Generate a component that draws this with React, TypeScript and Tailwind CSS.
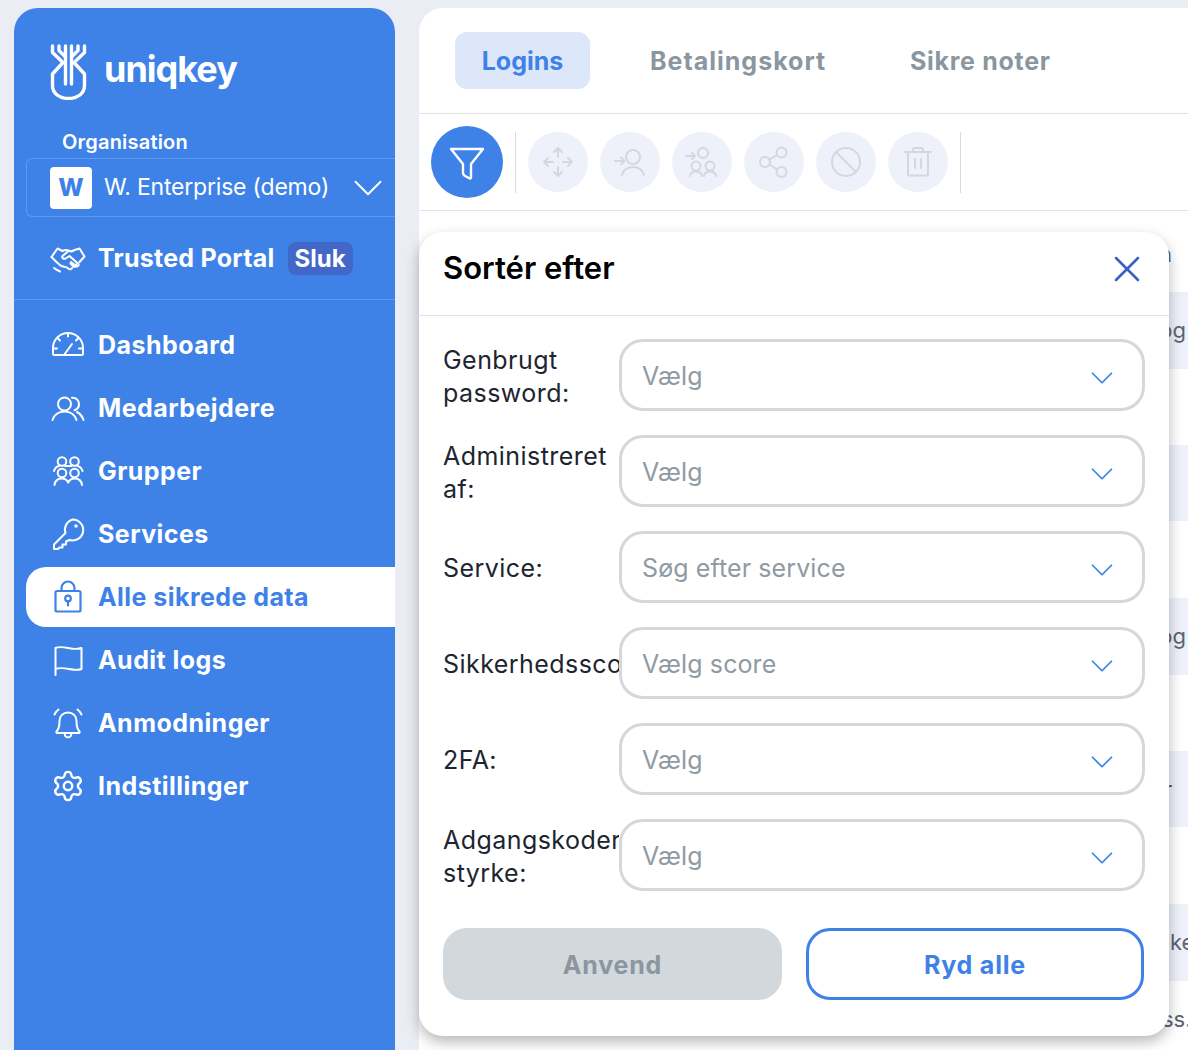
import React from 'react';
import { ChevronDown, X, Settings } from 'lucide-react';

const font = 'font-["Inter","Liberation_Sans",sans-serif]';

const Logo = () => (
  <svg width="37" height="56" viewBox="0 0 37 56" fill="none" stroke="white" strokeWidth="3.4" strokeLinecap="round" strokeLinejoin="round">
    <path d="M15.500 2v38M21.500 2v38" />
    <path d="M2.500 2v6.500l10.500 10-10.500 11.500v11.500c0 8 7 13 16 13s16-5 16-13V30L24 18.500 34.500 8.500V2" />
    <path d="M9 2v4.500l6.500 6.500M28 2v4.500L21.500 13" />
  </svg>
);

const Gauge = () => (
  <svg width="34" height="34" viewBox="0 0 34 34" fill="none" stroke="currentColor" strokeWidth="2" strokeLinecap="round" strokeLinejoin="round">
    <path d="M2 25.500V20a15 15 0 0 1 30 0v5.500c0 1-.5 1.500-1.500 1.500h-27c-1 0-1.500-.5-1.500-1.500Z" />
    <path d="M17 5v3.500M6.500 10l2.500 2.500M27.500 10 25 12.500M2.500 20.500h3.500M28 20.500h3.500M13 27l8-11" />
  </svg>
);

const Users = () => (
  <svg width="34" height="34" viewBox="0 0 34 34" fill="none" stroke="currentColor" strokeWidth="2" strokeLinecap="round" strokeLinejoin="round">
    <circle cx="13.500" cy="13" r="6.500" />
    <path d="M1.500 29c1.500-5 6-8.500 12-8.500s10.500 3.500 12 8.500" />
    <path d="M21 6.700c3.500-.5 7 2.300 7 6.300 0 3-1.700 5.300-4.500 6.200M26 21c3 1.500 5.200 4.300 6.500 8" />
  </svg>
);

const Groups = () => (
  <svg width="34" height="34" viewBox="0 0 34 34" fill="none" stroke="currentColor" strokeWidth="2" strokeLinecap="round" strokeLinejoin="round">
    <circle cx="11" cy="7.500" r="4.300" /><circle cx="23.500" cy="7.500" r="4.300" />
    <circle cx="11" cy="19" r="4.300" /><circle cx="23.500" cy="19" r="4.300" />
    <path d="M3 17c.8-3 3-4.500 5-5M31.500 17c-.8-3-3-4.500-5-5M14 12h6.500" />
    <path d="M3.500 31c.5-4 3.500-6.500 7.500-6.500 2.800 0 5 1.500 6.200 4 1.300-2.500 3.500-4 6.300-4 4 0 7 2.500 7.500 6.500" />
  </svg>
);

const KeyIcon = () => (
  <svg width="34" height="34" viewBox="0 0 34 34" fill="none" stroke="currentColor" strokeWidth="2" strokeLinecap="round" strokeLinejoin="round">
    <path d="M21.500 2.500a10.500 10.500 0 1 1-3 20.500l-3.500 1.500v3h-3.500v3h-3L7 32H3v-4.500L14.500 16a10.500 10.500 0 0 1 7-13.500Z" />
    <circle cx="25" cy="9" r=".8" />
  </svg>
);

const Lock = () => (
  <svg width="34" height="34" viewBox="0 0 34 34" fill="none" stroke="currentColor" strokeWidth="2.200" strokeLinecap="round" strokeLinejoin="round">
    <rect x="4.500" y="11" width="25" height="20.500" rx="1.500" />
    <path d="M10.500 11V8a6.500 6.500 0 0 1 13 0v3" />
    <circle cx="17" cy="18.500" r="2.800" />
    <path d="M17 21.300v4.200" />
  </svg>
);

const FlagIcon = () => (
  <svg width="34" height="34" viewBox="0 0 34 34" fill="none" stroke="currentColor" strokeWidth="2" strokeLinecap="round" strokeLinejoin="round">
    <path d="M4.500 32V5c8-3.500 17 3.500 26 0v21c-8 3.500-17-3.500-26 0" />
  </svg>
);

const Bell = () => (
  <svg width="34" height="34" viewBox="0 0 34 34" fill="none" stroke="currentColor" strokeWidth="2" strokeLinecap="round" strokeLinejoin="round">
    <path d="M5.500 25.500c2.500-2.500 3-6 3-10.500 0-5 3.500-8.500 8.500-8.500s8.500 3.500 8.500 8.500c0 4.500.5 8 3 10.500.5.800 0 1.500-.8 1.500H6.300c-.8 0-1.300-.7-.8-1.500Z" />
    <path d="M13.500 27.500c.3 2.500 1.700 3.800 3.500 3.800s3.200-1.300 3.500-3.800M3.500 8.500c.8-1.900 2.100-3.600 4-5M30.500 8.500c-.8-1.900-2.100-3.600-4-5" />
  </svg>
);

const Handshake = () => (
  <svg width="36" height="30" viewBox="0 0 36 30" fill="none" stroke="white" strokeWidth="2" strokeLinecap="round" strokeLinejoin="round">
    <path d="M1.500 13 7.500 4.500l5 2.500c2-1 4-1.500 6-.5l3 1 3-1.500 5-1.500 5 8-5 5.500" />
    <path d="M18.500 7l-6 5c-1 1.500 1 3.500 3 2.500l4-2.500 9 8c.8 1.500-1 3-2.500 2l-5-4M26 20.500c.8 1.500-1 3-2.500 2l-3-3M22 24c-.5 1.500-2 1.500-3 1l-3-2" />
    <path d="M1.500 13l5 5 4 3.500 4 1.500M4 24c2 1.500 4 2.500 6 3.500" />
  </svg>
);

const nav = [
  { label: 'Dashboard', icon: <Gauge /> },
  { label: 'Medarbejdere', icon: <Users /> },
  { label: 'Grupper', icon: <Groups /> },
  { label: 'Services', icon: <KeyIcon /> },
  { label: 'Alle sikrede data', icon: <Lock />, active: true },
  { label: 'Audit logs', icon: <FlagIcon /> },
  { label: 'Anmodninger', icon: <Bell /> },
  { label: 'Indstillinger', icon: <Settings size={34} strokeWidth={1.700} /> },
];

// toolbar icons, all in a 34 box
const iconProps = { width: 34, height: 34, viewBox: '0 0 34 34', fill: 'none', stroke: '#d3d8dc', strokeWidth: 2, strokeLinecap: 'round' as const, strokeLinejoin: 'round' as const };

const tools = [
  <svg {...iconProps}><path d="M17 3v9M17 22v9M3 17h9M22 17h9M13 7l4-4 4 4M13 27l4 4 4-4M7 13l-4 4 4 4M27 13l4 4-4 4" /></svg>,
  <svg {...iconProps}><circle cx="20" cy="12" r="7" /><path d="M9 30c1.500-5 5.500-8 11-8s9.500 3 11 8M2 16h9M8 12.500l3.500 3.500L8 19.500" /></svg>,
  <svg {...iconProps}><circle cx="18" cy="8" r="5" /><circle cx="11" cy="21" r="4.500" /><circle cx="25" cy="21" r="4.500" /><path d="M5 31c.5-3 3-4.500 6-4.500 3 0 5.500 1.500 6 4.500M19 31c.5-3 3-4.500 6-4.500 3 0 5.500 1.500 6 4.500M1 11h9M7 8l3 3-3 3" /></svg>,
  <svg {...iconProps}><circle cx="24.500" cy="7.500" r="5" /><circle cx="8" cy="17" r="5" /><circle cx="24.500" cy="27" r="5" /><path d="M12.500 14.500 20 10M12.500 19.500 20 24.500" /></svg>,
  <svg {...iconProps}><circle cx="17" cy="17" r="14" /><path d="M7 7l20 20" /></svg>,
  <svg {...iconProps}><path d="M4 7h26M12 7V4.500c0-1 .5-1.500 1.500-1.500h7c1 0 1.500.5 1.500 1.500V7M7 7v22c0 1 .5 1.500 1.500 1.500h17c1 0 1.500-.5 1.500-1.500V7M14 14v9M20 14v9" /></svg>,
];

const fields = [
  { label: ['Genbrugt', 'password:'], placeholder: 'Vælg' },
  { label: ['Administreret', 'af:'], placeholder: 'Vælg' },
  { label: ['Service:'], placeholder: 'Søg efter service' },
  { label: ['Sikkerhedsscore:'], placeholder: 'Vælg score' },
  { label: ['2FA:'], placeholder: 'Vælg' },
  { label: ['Adgangskoder', 'styrke:'], placeholder: 'Vælg' },
];

const rows = [
  { text: 'n', pl: 'pl-[740px] pt-[6px]', band: false, h: 'h-[81px]' },
  { text: 'log', pl: 'pl-[735px]', band: true, h: 'h-[77px]' },
  { text: '', pl: '', band: false, h: 'h-[76px]' },
  { text: '', pl: '', band: true, h: 'h-[76px]' },
  { text: '', pl: '', band: false, h: 'h-[77px]' },
  { text: 'log', pl: 'pl-[735px]', band: true, h: 'h-[77px]' },
  { text: '', pl: '', band: false, h: 'h-[76px]' },
  { text: 'r', pl: 'pl-[745px]', band: true, h: 'h-[76px]' },
  { text: '', pl: '', band: false, h: 'h-[77px]' },
  { text: 'ke', pl: 'pl-[751px]', band: true, h: 'h-[77px]' },
  { text: 'ss.', pl: 'pl-[743px]', band: false, h: 'h-[76px]' },
];

export default function App() {
  return (
    <div className={`${font} flex h-[1050px] w-[1188px] gap-6 overflow-hidden bg-[#eaedf4] pl-[14px] pt-2`}>
      <aside className="h-[1100px] w-[381px] shrink-0 rounded-t-[24px] bg-[#3e82e8] text-white">
        <div className="flex items-center gap-[17px] pl-9 pt-9">
          <Logo />
          <span className="pb-[6px] text-[36px] font-bold leading-none tracking-[-1px]">uniqkey</span>
        </div>
        <div className="pl-12 pt-[29px] text-[20px] font-semibold leading-[26px] tracking-[0.2px]">Organisation</div>
        <div className="mb-[25px] ml-3 mt-[3px] flex h-[59px] items-center rounded-l-md border border-r-0 border-[#5f9af0] pl-[23px]">
          <div className="flex size-[42px] items-center justify-center rounded bg-white text-[24px] font-extrabold text-[#3e82e8]">W</div>
          <span className="ml-3 text-[23px] tracking-[-0.2px]">W. Enterprise (demo)</span>
          <ChevronDown size={50} strokeWidth={0.900} className="ml-[14px] shrink-0" />
        </div>
        <div className="flex items-center border-b border-[#5f9af0] pb-[24px] pl-9 text-[25px] font-bold leading-[33px]">
          <Handshake />
          <span className="ml-3 tracking-[0.25px]">Trusted Portal</span>
          <span className="ml-[13px] rounded-lg bg-[#4267c8] px-[7px] text-[24px]">Sluk</span>
        </div>
        <nav className="flex flex-col gap-[3px] pl-3 pt-[15px]">
          {nav.map((item) => (
            <div
              key={item.label}
              className={`flex h-[60px] items-center gap-[13px] pl-[25px] text-[25px] font-bold tracking-[0.45px] ${item.active ? 'rounded-l-[20px] bg-white text-[#3e82e8]' : ''}`}
            >
              {item.icon}
              <span className="pt-[2px]">{item.label}</span>
            </div>
          ))}
        </nav>
      </aside>

      <main className="relative h-[1100px] w-[800px] shrink-0 rounded-tl-[24px] bg-white">
        <div className="flex h-[106px] items-start gap-[60px] border-b border-[#e1e3e6] pl-9 pt-6 text-[25px] font-bold">
          <div className="flex h-[57px] w-[135px] items-center justify-center rounded-xl bg-[#dce8fa] pt-[2px] text-[#3e82e8]">Logins</div>
          <div className="flex h-[57px] w-[200px] items-center pt-[2px] tracking-[1px] text-[#8a96a0]">Betalingskort</div>
          <div className="flex h-[57px] items-center pt-[2px] tracking-[0.7px] text-[#8a96a0]">Sikre noter</div>
        </div>
        <div className="flex h-[97px] items-center border-b border-[#e1e3e6] pl-3">
          <div className="flex size-[72px] items-center justify-center rounded-full bg-[#3e82e8]">
            <svg className="mt-[3px]" width="36" height="36" viewBox="0 0 36 36" fill="none" stroke="white" strokeWidth="2.400" strokeLinecap="round" strokeLinejoin="round">
              <path d="M2 3h32L22 18v13.500c0 .8-1 1.300-1.700.8l-4.600-2.600c-1-.7-1.700-1.400-1.700-2.700V18Z" />
            </svg>
          </div>
          <div className="ml-3 h-[61px] w-px bg-[#d9dcdf]" />
          <div className="ml-3 flex gap-3">
            {tools.map((icon, i) => (
              <div key={i} className="flex size-[60px] items-center justify-center rounded-full bg-[#eef1f9]">{icon}</div>
            ))}
          </div>
          <div className="ml-3 h-[61px] w-px bg-[#d9dcdf]" />
        </div>
        <div className="text-[22px] text-[#5b6370]">
          {rows.map((row, i) => (
            <div key={i} className={`flex items-center ${row.h} ${row.pl} ${row.band ? 'bg-[#eef1f9]' : ''}`}>{row.text}</div>
          ))}
        </div>

        {/* filter dialog */}
        <div className="absolute left-0 top-[224px] h-[804px] w-[750px] rounded-[24px] bg-white shadow-[0_6px_14px_rgba(0,0,0,0.28)]">
          <div className="flex h-[84px] items-center justify-between border-b border-[#dfe1e4] pb-[10px] pl-6 pr-[20px]">
            <span className="text-[31px] font-semibold text-black">Sortér efter</span>
            <X size={44} strokeWidth={1.400} className="text-[#3b5fc4]" />
          </div>
          <div className="flex flex-col gap-6 pl-6 pt-[23px]">
            {fields.map((f) => (
              <div key={f.placeholder + f.label[0]} className="flex h-[72px] items-center">
                <div className="w-[176px] shrink-0 overflow-hidden whitespace-nowrap pt-[3px] text-[25px] leading-[33px] tracking-[0.45px] text-[#1c2530]">
                  {f.label.map((l) => <div key={l}>{l}</div>)}
                </div>
                <div className="flex h-[72px] w-[526px] items-center justify-between rounded-[24px] border-[3px] border-[#d3d8dc] pl-[20px] pr-[21px] text-[25px] tracking-[0.1px] text-[#8f9aa3]">
                  <span className="pt-[4px]">{f.placeholder}</span>
                  <ChevronDown size={38} strokeWidth={1.100} className="mt-[5px] text-[#3e82e8]" />
                </div>
              </div>
            ))}
          </div>
          <div className="flex gap-6 pl-6 pt-[37px] text-[25px] font-bold tracking-[0.8px]">
            <div className="flex h-[72px] w-[339px] items-center justify-center rounded-[24px] bg-[#d3d8dc] pt-[3px] text-[#8a96a0]">Anvend</div>
            <div className="flex h-[72px] w-[338px] items-center justify-center rounded-[24px] border-[3px] border-[#3e82e8] pt-[3px] text-[#3e82e8]">Ryd alle</div>
          </div>
        </div>
      </main>
    </div>
  );
}
